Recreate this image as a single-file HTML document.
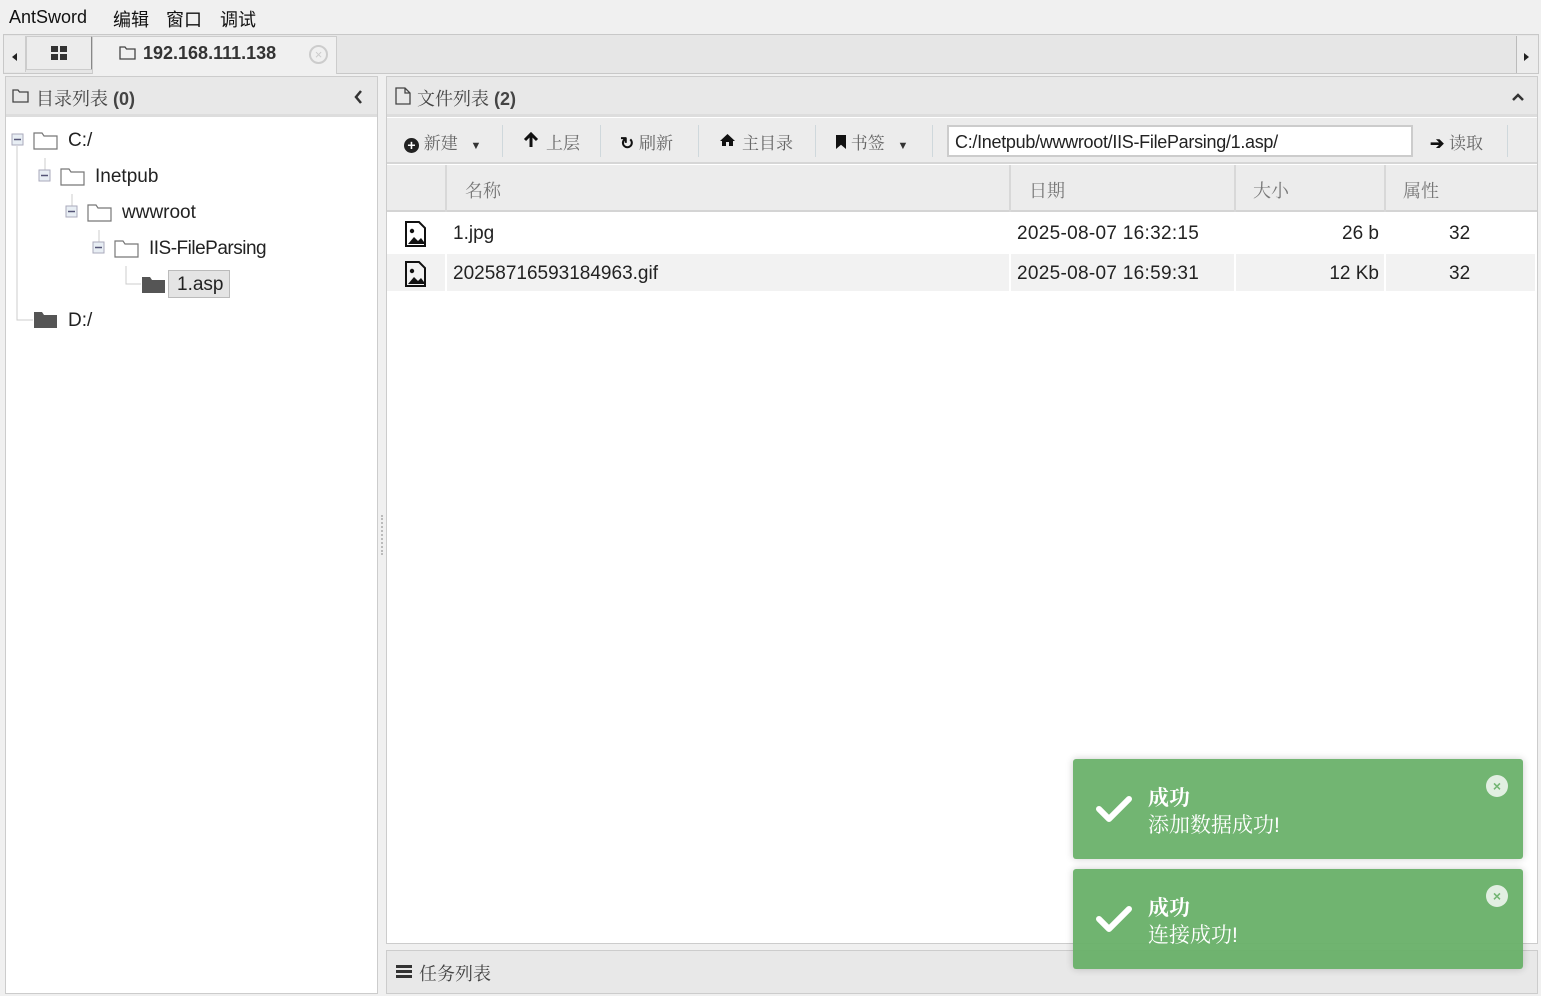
<!DOCTYPE html>
<html><head><meta charset="utf-8"><style>
*{box-sizing:border-box;margin:0;padding:0}
body{width:1541px;height:996px;background:#f0f0f0;font-family:"Liberation Sans","Noto Sans CJK SC",sans-serif;position:relative;overflow:hidden;color:#222}
.a{position:absolute}
.cn{font-family:"Liberation Sans","Noto Serif CJK SC",serif}
</style></head><body>
<!-- menu -->
<div class="a" style="left:9px;top:7px;font-size:18px;color:#111">AntSword</div>
<div class="a" style="left:113px;top:6px;font-size:18px;color:#111">编辑</div>
<div class="a" style="left:166px;top:6px;font-size:18px;color:#111">窗口</div>
<div class="a" style="left:220px;top:6px;font-size:18px;color:#111">调试</div>
<!-- tab bar -->
<div class="a" style="left:3px;top:34px;width:1536px;height:40px;background:#e6e6e6;border:1px solid #c8c8c8"></div>
<div class="a" style="left:4px;top:36px;width:22px;height:36px;background:#ececec;border-right:1px solid #ccc"></div>
<div class="a" style="left:12px;top:53px;border:4px solid transparent;border-right:5px solid #222;border-left:0"></div>
<div class="a" style="left:26px;top:36px;width:67px;height:34px;background:#ececec;border:1px solid #ccc;border-right:2px solid #888"></div>
<div class="a" style="left:51px;top:46px;width:7px;height:6px;background:#333"></div><div class="a" style="left:60px;top:46px;width:7px;height:6px;background:#333"></div>
<div class="a" style="left:51px;top:54px;width:7px;height:6px;background:#333"></div><div class="a" style="left:60px;top:54px;width:7px;height:6px;background:#333"></div>
<div class="a" style="left:92px;top:36px;width:245px;height:38px;background:#f0f0f0;border:1px solid #ccc;border-bottom:none"></div>
<svg class="a" style="left:119px;top:45px" width="18" height="16"><path d="M1 2h5l1.5 2H16v10H1z" fill="none" stroke="#444" stroke-width="1.3"/></svg>
<div class="a" style="left:143px;top:43px;font-size:18px;font-weight:bold;color:#333">192.168.111.138</div>
<div class="a" style="left:309px;top:45px;width:19px;height:19px;border-radius:50%;border:2px solid #ccc;color:#ccc;font-size:13px;line-height:15px;text-align:center">×</div>
<div class="a" style="left:1516px;top:36px;width:22px;height:37px;background:#ececec;border-left:1px solid #bbb"></div>
<div class="a" style="left:1524px;top:53px;border:4px solid transparent;border-left:5px solid #222;border-right:0"></div>
<!-- left panel -->
<div class="a" style="left:5px;top:76px;width:373px;height:918px;background:#fff;border:1px solid #ccc"></div>
<div class="a" style="left:6px;top:77px;width:371px;height:40px;background:#e8e8e8;border-bottom:3px solid #ddd"></div>
<svg class="a" style="left:12px;top:88px" width="18" height="16"><path d="M1 2h5l1.5 2H16v10H1z" fill="none" stroke="#444" stroke-width="1.3"/></svg>
<div class="a cn" style="left:36px;top:85px;font-size:18px;color:#444">目录列表 <b style="font-family:'Liberation Sans'">(0)</b></div>
<svg class="a" style="left:353px;top:89px" width="10" height="16"><path d="M8 2L3 8l5 6" fill="none" stroke="#333" stroke-width="2.5"/></svg>
<!-- tree -->
<svg class="a" style="left:5px;top:120px" width="373" height="220">
<g stroke="#ccc" fill="none"><path d="M12 26V200H28M40 38V56M67 74V92M94 110V128M121 146V164H136"/></g>
<g fill="#e8eef4" stroke="#aab"><rect x="7" y="14" width="11" height="11"/><rect x="34" y="50" width="11" height="11"/><rect x="61" y="86" width="11" height="11"/><rect x="88" y="122" width="11" height="11"/></g>
<g stroke="#557" stroke-width="1.5"><path d="M9 19.5h7M36 55.5h7M63 91.5h7M90 127.5h7"/></g>
<g fill="#fff" stroke="#777" stroke-width="1.2"><path d="M29 13h8l2 3h13v13H29z"/><path d="M56 49h8l2 3h13v13H56z"/><path d="M83 85h8l2 3h13v13H83z"/><path d="M110 121h8l2 3h13v13h-23z"/></g>
<g fill="#555"><path d="M137 157h8l2 3h13v13h-23z"/><path d="M29 192h8l2 3h13v13H29z"/></g>
</svg>
<div class="a" style="left:68px;top:130px;font-size:19px">C:/</div>
<div class="a" style="left:95px;top:166px;font-size:19px">Inetpub</div>
<div class="a" style="left:122px;top:202px;font-size:19px">wwwroot</div>
<div class="a" style="left:149px;top:238px;font-size:19px;letter-spacing:-0.5px">IIS-FileParsing</div>
<div class="a" style="left:168px;top:270px;width:62px;height:28px;background:#e4e4e4;border:1px solid #bbb;font-size:19px;padding:3px 0 0 8px">1.asp</div>
<div class="a" style="left:68px;top:310px;font-size:19px">D:/</div>
<div class="a" style="left:381px;top:515px;height:40px;border-left:2px dotted #bbb"></div>
<!-- right panel -->
<div class="a" style="left:386px;top:76px;width:1152px;height:868px;background:#fff;border:1px solid #ccc"></div>
<div class="a" style="left:387px;top:77px;width:1150px;height:40px;background:#e8e8e8;border-bottom:3px solid #ddd"></div>
<svg class="a" style="left:395px;top:87px" width="16" height="18"><path d="M1 1h9l5 5v11H1z M10 1v5h5" fill="none" stroke="#444" stroke-width="1.3"/></svg>
<div class="a cn" style="left:417px;top:85px;font-size:18px;color:#444">文件列表 <b style="font-family:'Liberation Sans'">(2)</b></div>
<svg class="a" style="left:1511px;top:92px" width="14" height="10"><path d="M2 8l5-5 5 5" fill="none" stroke="#333" stroke-width="2.5"/></svg>
<!-- toolbar -->
<div class="a" style="left:387px;top:118px;width:1150px;height:46px;background:#ececec;border-bottom:2px solid #d6d6d6"></div>
<div class="a cn" style="left:404px;top:129px;font-size:17px;color:#666;white-space:nowrap"><span style="display:inline-block;width:15px;height:15px;border-radius:50%;background:#222;color:#fff;font-size:14px;line-height:15px;text-align:center;font-weight:bold;vertical-align:-1px">+</span> 新建 <span style="font-size:11px;color:#333;margin-left:8px">▼</span></div>
<svg class="a" style="left:523px;top:132px" width="16" height="16"><path d="M8 15V3M2 8l6-6 6 6" fill="none" stroke="#111" stroke-width="3"/></svg>
<div class="a cn" style="left:546px;top:129px;font-size:17px;color:#666">上层</div>
<div class="a cn" style="left:620px;top:129px;font-size:17px;color:#666"><b style="color:#111">↻</b> 刷新</div>
<svg class="a" style="left:719px;top:133px" width="17" height="14"><path d="M8.5 1L1 8h2v5h4V9h3v4h4V8h2z" fill="#111"/></svg>
<div class="a cn" style="left:742px;top:129px;font-size:17px;color:#666">主目录</div>
<div class="a cn" style="left:836px;top:129px;font-size:17px;color:#666"><span style="display:inline-block;width:10px;height:14px;background:#111;clip-path:polygon(0 0,100% 0,100% 100%,50% 70%,0 100%)"></span> 书签 <span style="font-size:11px;color:#333;margin-left:8px">▼</span></div>
<div class="a" style="left:502px;top:125px;height:32px;border-left:1px solid #cfd8dc"></div>
<div class="a" style="left:600px;top:125px;height:32px;border-left:1px solid #cfd8dc"></div>
<div class="a" style="left:698px;top:125px;height:32px;border-left:1px solid #cfd8dc"></div>
<div class="a" style="left:815px;top:125px;height:32px;border-left:1px solid #cfd8dc"></div>
<div class="a" style="left:932px;top:125px;height:32px;border-left:1px solid #cfd8dc"></div>
<div class="a" style="left:1507px;top:125px;height:32px;border-left:1px solid #cfd8dc"></div>
<div class="a" style="left:947px;top:125px;width:466px;height:32px;background:#fff;border:2px solid #ccc;font-size:18px;padding:5px 6px;color:#222;letter-spacing:-0.3px">C:/Inetpub/wwwroot/IIS-FileParsing/1.asp/</div>
<div class="a cn" style="left:1430px;top:129px;font-size:17px;color:#666"><b style="color:#111">➔</b> 读取</div>
<!-- grid header -->
<div class="a" style="left:387px;top:165px;width:1150px;height:47px;background:#ececec;border-bottom:2px solid #d4d4d4"></div>
<div class="a" style="left:445px;top:165px;height:47px;border-left:2px solid #d8d8d8"></div>
<div class="a" style="left:1009px;top:165px;height:47px;border-left:2px solid #d8d8d8"></div>
<div class="a" style="left:1234px;top:165px;height:47px;border-left:2px solid #d8d8d8"></div>
<div class="a" style="left:1384px;top:165px;height:47px;border-left:2px solid #d8d8d8"></div>
<div class="a cn" style="left:465px;top:177px;font-size:18px;color:#777">名称</div>
<div class="a cn" style="left:1029px;top:177px;font-size:18px;color:#777">日期</div>
<div class="a cn" style="left:1253px;top:177px;font-size:18px;color:#777">大小</div>
<div class="a cn" style="left:1403px;top:177px;font-size:18px;color:#777">属性</div>
<!-- rows -->
<div class="a" style="left:387px;top:254px;width:1148px;height:37px;background:#f2f2f2"></div>
<div class="a" style="left:445px;top:213px;height:78px;border-left:2px solid #fff"></div>
<div class="a" style="left:1009px;top:213px;height:78px;border-left:2px solid #fff"></div>
<div class="a" style="left:1234px;top:213px;height:78px;border-left:2px solid #fff"></div>
<div class="a" style="left:1384px;top:213px;height:78px;border-left:2px solid #fff"></div>
<svg class="a" style="left:405px;top:221px" width="22" height="26"><path d="M1 1h13l6 6v18H1z" fill="none" stroke="#111" stroke-width="2"/><path d="M3 23l6-7 4 4 3-3 3 4v2z" fill="#111"/><circle cx="7" cy="10" r="2.2" fill="#111"/></svg>
<svg class="a" style="left:405px;top:261px" width="22" height="26"><path d="M1 1h13l6 6v18H1z" fill="none" stroke="#111" stroke-width="2"/><path d="M3 23l6-7 4 4 3-3 3 4v2z" fill="#111"/><circle cx="7" cy="10" r="2.2" fill="#111"/></svg>
<div class="a" style="left:453px;top:223px;font-size:19px">1.jpg</div>
<div class="a" style="left:1017px;top:223px;font-size:19px;letter-spacing:0.3px">2025-08-07 16:32:15</div>
<div class="a" style="left:1240px;top:223px;width:139px;text-align:right;font-size:19px">26 b</div>
<div class="a" style="left:1449px;top:223px;font-size:19px">32</div>
<div class="a" style="left:453px;top:263px;font-size:19px">20258716593184963.gif</div>
<div class="a" style="left:1017px;top:263px;font-size:19px;letter-spacing:0.3px">2025-08-07 16:59:31</div>
<div class="a" style="left:1240px;top:263px;width:139px;text-align:right;font-size:19px">12 Kb</div>
<div class="a" style="left:1449px;top:263px;font-size:19px">32</div>
<!-- task panel -->
<div class="a" style="left:386px;top:950px;width:1152px;height:44px;background:#e8e8e8;border:1px solid #ccc"></div>
<div class="a" style="left:396px;top:965px;width:16px;height:13px;border-top:3px solid #333;border-bottom:3px solid #333"></div><div class="a" style="left:396px;top:970px;width:16px;height:3px;background:#333"></div>
<div class="a cn" style="left:419px;top:960px;font-size:18px;color:#444">任务列表</div>
<!-- toasts -->
<div class="a" style="left:1073px;top:759px;width:450px;height:100px;background:#72b572;border-radius:3px;box-shadow:0 0 8px rgba(0,0,0,.2)"></div>
<div class="a" style="left:1073px;top:869px;width:450px;height:100px;background:rgba(104,176,104,.95);border-radius:3px;box-shadow:0 0 8px rgba(0,0,0,.2)"></div>
<svg class="a" style="left:1095px;top:794px" width="38" height="30"><path d="M4 15l10 10L34 5" fill="none" stroke="#fff" stroke-width="6" stroke-linecap="round" stroke-linejoin="round"/></svg>
<svg class="a" style="left:1095px;top:904px" width="38" height="30"><path d="M4 15l10 10L34 5" fill="none" stroke="#fff" stroke-width="6" stroke-linecap="round" stroke-linejoin="round"/></svg>
<div class="a cn" style="left:1148px;top:782px;font-size:21px;font-weight:bold;color:#fff">成功</div>
<div class="a cn" style="left:1148px;top:809px;font-size:21px;color:#fff">添加数据成功!</div>
<div class="a cn" style="left:1148px;top:892px;font-size:21px;font-weight:bold;color:#fff">成功</div>
<div class="a cn" style="left:1148px;top:919px;font-size:21px;color:#fff">连接成功!</div>
<div class="a" style="left:1486px;top:775px;width:22px;height:22px;border-radius:50%;background:#e2efe2;color:#72b572;font-size:14px;font-weight:bold;line-height:22px;text-align:center">×</div>
<div class="a" style="left:1486px;top:885px;width:22px;height:22px;border-radius:50%;background:#e2efe2;color:#72b572;font-size:14px;font-weight:bold;line-height:22px;text-align:center">×</div>
</body></html>
